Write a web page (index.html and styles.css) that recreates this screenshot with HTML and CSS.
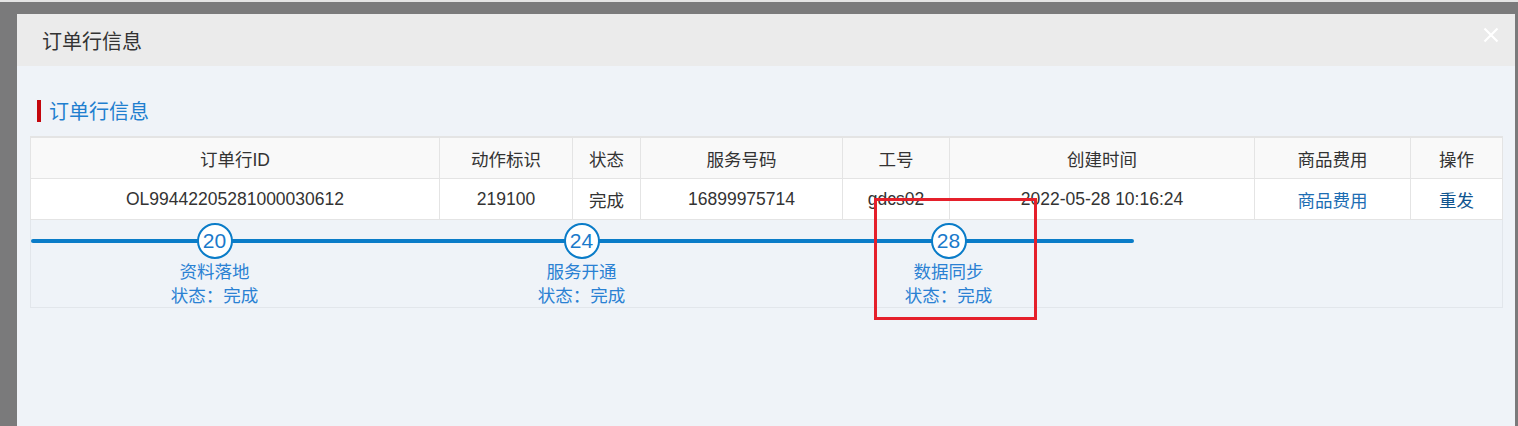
FILE: index.html
```html
<!DOCTYPE html>
<html lang="zh-CN">
<head>
<meta charset="utf-8">
<title>订单行信息</title>
<link rel="stylesheet" href="styles.css">
</head>
<body>
<div class="topline"></div>
<div class="modal">
  <div class="modal-header">
    <span class="modal-title">订单行信息</span>
    <span class="close" aria-label="关闭">
      <svg width="16" height="16" viewBox="0 0 16 16"><path d="M1.5 1.5 L14.5 14.5 M14.5 1.5 L1.5 14.5" stroke="#fff" stroke-width="2.2" fill="none"/></svg>
    </span>
  </div>
  <div class="modal-body">
    <div class="section-title">订单行信息</div>
    <table class="grid">
      <colgroup>
        <col class="c1"><col class="c2"><col class="c3"><col class="c4"><col class="c5"><col class="c6"><col class="c7"><col class="c8">
      </colgroup>
      <thead>
        <tr>
          <th>订单行ID</th><th>动作标识</th><th>状态</th><th>服务号码</th><th>工号</th><th>创建时间</th><th>商品费用</th><th>操作</th>
        </tr>
      </thead>
      <tbody>
        <tr class="data">
          <td>OL99442205281000030612</td><td>219100</td><td>完成</td><td>16899975714</td><td>gdcs02</td><td>2022-05-28 10:16:24</td><td><a class="link">商品费用</a></td><td><a class="link dark">重发</a></td>
        </tr>
        <tr class="steps-row">
          <td colspan="8">
            <div class="steps">
              <div class="step"><span class="num">20</span><span class="lbl">资料落地</span><span class="lbl">状态：完成</span></div>
              <div class="step"><span class="num">24</span><span class="lbl">服务开通</span><span class="lbl">状态：完成</span></div>
              <div class="step"><span class="num">28</span><span class="lbl">数据同步</span><span class="lbl">状态：完成</span></div>
            </div>
          </td>
        </tr>
      </tbody>
    </table>
  </div>
  <div class="mark"></div>
</div>
</body>
</html>
```

FILE: styles.css
```css
html, body {
  margin: 0;
  padding: 0;
}
body {
  background: #7a7a7b;
  height: 426px;
  overflow: hidden;
  font-family: "Liberation Sans", "Noto Sans CJK SC", sans-serif;
}
.topline {
  height: 2px;
  background: #e4e4e4;
}
.modal {
  position: relative;
  margin: 12px 0 0 17px;
  width: 1498px;
  height: 412px;
  background: #eff3f8;
}
.modal-header {
  position: relative;
  height: 52px;
  background: #ebebeb;
  display: flex;
  align-items: center;
  padding-left: 25px;
}
.modal-title {
  font-family: "Noto Sans CJK SC", sans-serif;
  font-size: 20px;
  color: #333;
}
.close {
  position: absolute;
  right: 16px;
  top: 13px;
  width: 16px;
  height: 16px;
  display: block;
}
.close svg { display: block; }
.modal-body {
  padding: 34px 13px 0 13px;
}
.section-title {
  margin-left: 7px;
  height: 22px;
  line-height: 22px;
  border-left: 4px solid #c4060d;
  padding-left: 8px;
  font-family: "Noto Sans CJK SC", sans-serif;
  font-size: 20px;
  color: #1f7fcf;
}
.grid {
  margin-top: 14px;
  width: 1472px;
  table-layout: fixed;
  border-collapse: collapse;
  border-top: 2px solid #e4e4e4;
}
.c1 { width: 409px; }
.c2 { width: 133px; }
.c3 { width: 68px; }
.c4 { width: 202px; }
.c5 { width: 107px; }
.c6 { width: 305px; }
.c7 { width: 156px; }
.c8 { width: 92px; }
.grid th, .grid td {
  border: 1px solid #e4e4e4;
  text-align: center;
  font-weight: normal;
  font-size: 17.5px;
  color: #333;
  padding: 0;
  white-space: nowrap;
}
.grid th {
  height: 40px;
  background: #f9f9f9;
}
.grid .data td {
  height: 40px;
  background: #fff;
}
.link {
  color: #1d6db3;
  cursor: pointer;
}
.link.dark {
  color: #0f548f;
}
.grid .steps-row td {
  border-color: #e2e6eb;
  background: #eff3f8;
  height: 87px;
  vertical-align: top;
  text-align: left;
}
.steps {
  display: flex;
  padding-top: 3px;
}
.step {
  position: relative;
  width: 367px;
  display: flex;
  flex-direction: column;
  align-items: center;
}
.step::before {
  content: "";
  position: absolute;
  left: 0;
  right: 0;
  top: 16px;
  height: 4px;
  background: #0a7cc8;
}
.step:first-child::before { border-radius: 2px 0 0 2px; }
.step:last-child::before { right: -2px; border-radius: 0 2px 2px 0; }
.num {
  position: relative;
  width: 32px;
  height: 32px;
  border: 2px solid #0a7cc8;
  border-radius: 50%;
  background: #fff;
  color: #1a7acb;
  font-size: 21px;
  line-height: 32px;
  text-align: center;
}
.lbl {
  font-family: "Noto Sans CJK SC", sans-serif;
  font-size: 17.5px;
  line-height: 24px;
  color: #2a81d3;
}
.mark {
  position: absolute;
  left: 857px;
  top: 184px;
  width: 157px;
  height: 116px;
  border: 3px solid #e5202b;
}
```
